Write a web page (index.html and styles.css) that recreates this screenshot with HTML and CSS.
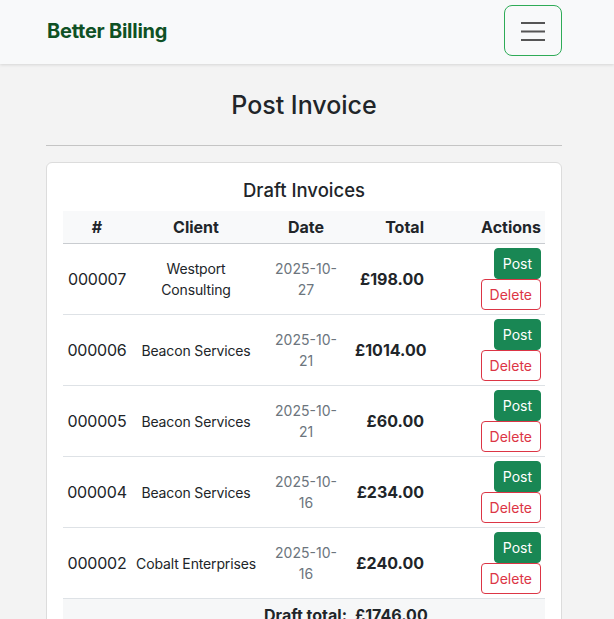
FILE: index.html
```html
<!DOCTYPE html>
<html lang="en">
<head>
<meta charset="utf-8">
<title>Post Invoice</title>
<link rel="stylesheet" href="styles.css">
</head>
<body>
<nav class="navbar">
  <div class="nav-inner">
    <span class="brand">Better Billing</span>
    <button class="toggler" aria-label="Menu">
      <svg width="26" height="20" viewBox="0 0 26 20"><path d="M1 2h24M1 10.5h24M1 19h24" stroke="#555" stroke-width="2" fill="none"/></svg>
    </button>
  </div>
</nav>
<main class="container">
  <h1 class="page-title">Post Invoice</h1>
  <hr class="divider">
  <section class="card">
    <h2 class="card-title">Draft Invoices</h2>
    <table class="invoices">
      <colgroup>
        <col class="c1"><col class="c2"><col class="c3"><col class="c4"><col class="c5">
      </colgroup>
      <thead>
        <tr><th class="center">#</th><th class="center">Client</th><th class="center">Date</th><th class="right">Total</th><th class="right">Actions</th></tr>
      </thead>
      <tbody>
        <tr>
          <td class="center num">000007</td>
          <td class="center client">Westport Consulting</td>
          <td class="center date"><span class="dt">2025-10-27</span></td>
          <td class="right total">£198.00</td>
          <td class="right"><div class="actions"><button class="btn post">Post</button><button class="btn del">Delete</button></div></td>
        </tr>
        <tr>
          <td class="center num">000006</td>
          <td class="center client">Beacon Services</td>
          <td class="center date"><span class="dt">2025-10-21</span></td>
          <td class="right total">£1014.00</td>
          <td class="right"><div class="actions"><button class="btn post">Post</button><button class="btn del">Delete</button></div></td>
        </tr>
        <tr>
          <td class="center num">000005</td>
          <td class="center client">Beacon Services</td>
          <td class="center date"><span class="dt">2025-10-21</span></td>
          <td class="right total">£60.00</td>
          <td class="right"><div class="actions"><button class="btn post">Post</button><button class="btn del">Delete</button></div></td>
        </tr>
        <tr>
          <td class="center num">000004</td>
          <td class="center client">Beacon Services</td>
          <td class="center date"><span class="dt">2025-10-16</span></td>
          <td class="right total">£234.00</td>
          <td class="right"><div class="actions"><button class="btn post">Post</button><button class="btn del">Delete</button></div></td>
        </tr>
        <tr>
          <td class="center num">000002</td>
          <td class="center client">Cobalt Enterprises</td>
          <td class="center date"><span class="dt">2025-10-16</span></td>
          <td class="right total">£240.00</td>
          <td class="right"><div class="actions"><button class="btn post">Post</button><button class="btn del">Delete</button></div></td>
        </tr>
      </tbody>
      <tfoot>
        <tr><td colspan="3" class="right foot label">Draft total:</td><td class="right foot">£1746.00</td><td></td></tr>
      </tfoot>
    </table>
  </section>
</main>
</body>
</html>
```
FILE: styles.css
```css
* { box-sizing: border-box; }
html, body { margin: 0; }
body {
  background: #f3f3f3;
  font-family: Inter, "Noto Sans", sans-serif;
  color: #212529;
  font-size: 16px;
  line-height: 1.5;
}
.navbar {
  background: #f8f9fa;
  height: 64px;
  box-shadow: 0 1px 3px rgba(0,0,0,0.12);
}
.nav-inner {
  margin: 0 52px 0 47px;
  height: 64px;
  display: flex;
  align-items: center;
  justify-content: space-between;
  padding-bottom: 3px;
}
.brand {
  font-size: 20px;
  font-weight: 700;
  color: #0f5125;
  letter-spacing: -0.25px;
}
.toggler {
  width: 58px;
  height: 51px;
  border: 1px solid #2eab57;
  border-radius: 8px;
  background: transparent;
  display: flex;
  align-items: center;
  justify-content: center;
  padding: 0;
}
.container {
  margin: 0 52px 0 46px;
}
.page-title {
  margin: 0;
  padding-top: 26px;
  text-align: center;
  font-size: 25px;
  font-weight: 500;
  line-height: 30px;
}
.divider {
  margin: 25px 0 16px;
  border: 0;
  border-top: 1px solid #c4c4c4;
}
.card {
  background: #fff;
  border: 1px solid #dcdcdc;
  border-radius: 6px;
  padding: 16px 16px 0;
}
.card-title {
  margin: 0 0 9px;
  text-align: center;
  font-size: 18.5px;
  font-weight: 500;
  line-height: 23px;
}
.invoices {
  width: 100%;
  border-collapse: collapse;
  table-layout: fixed;
}
.c1 { width: 68px; }
.c2 { width: 130px; }
.c3 { width: 90px; }
.c4 { width: 77px; }
.c5 { width: auto; }
.invoices th, .invoices td {
  padding: 4px;
  vertical-align: middle;
}
.invoices thead th {
  background: #f8f9fa;
  font-weight: 700;
  border-bottom: 1px solid #c9ccd0;
}
.invoices tbody td {
  border-bottom: 1px solid #dee2e6;
}
.center { text-align: center; }
.right { text-align: right; }
.num { letter-spacing: -0.2px; }
.client { font-size: 14px; line-height: 21px; letter-spacing: -0.15px; }
.date { font-size: 14px; line-height: 21px; color: #6c757d; }
.dt { display: inline-block; width: 70px; }
.total { font-weight: 700; }
.actions {
  display: flex;
  flex-direction: column;
  align-items: flex-end;
}
.btn {
  font-family: inherit;
  font-size: 14px;
  line-height: 21px;
  padding: 4px 8px;
  border-radius: 4px;
  border: 1px solid transparent;
  cursor: pointer;
}
.post {
  background: #198754;
  border-color: #198754;
  color: #fff;
}
.del {
  background: #fff;
  border-color: #dc3545;
  color: #dc3545;
}
.invoices tfoot td {
  background: #f6f7f8;
}
.foot { font-weight: 700; padding-top: 6px; }
.label { padding-right: 8px; }
```
